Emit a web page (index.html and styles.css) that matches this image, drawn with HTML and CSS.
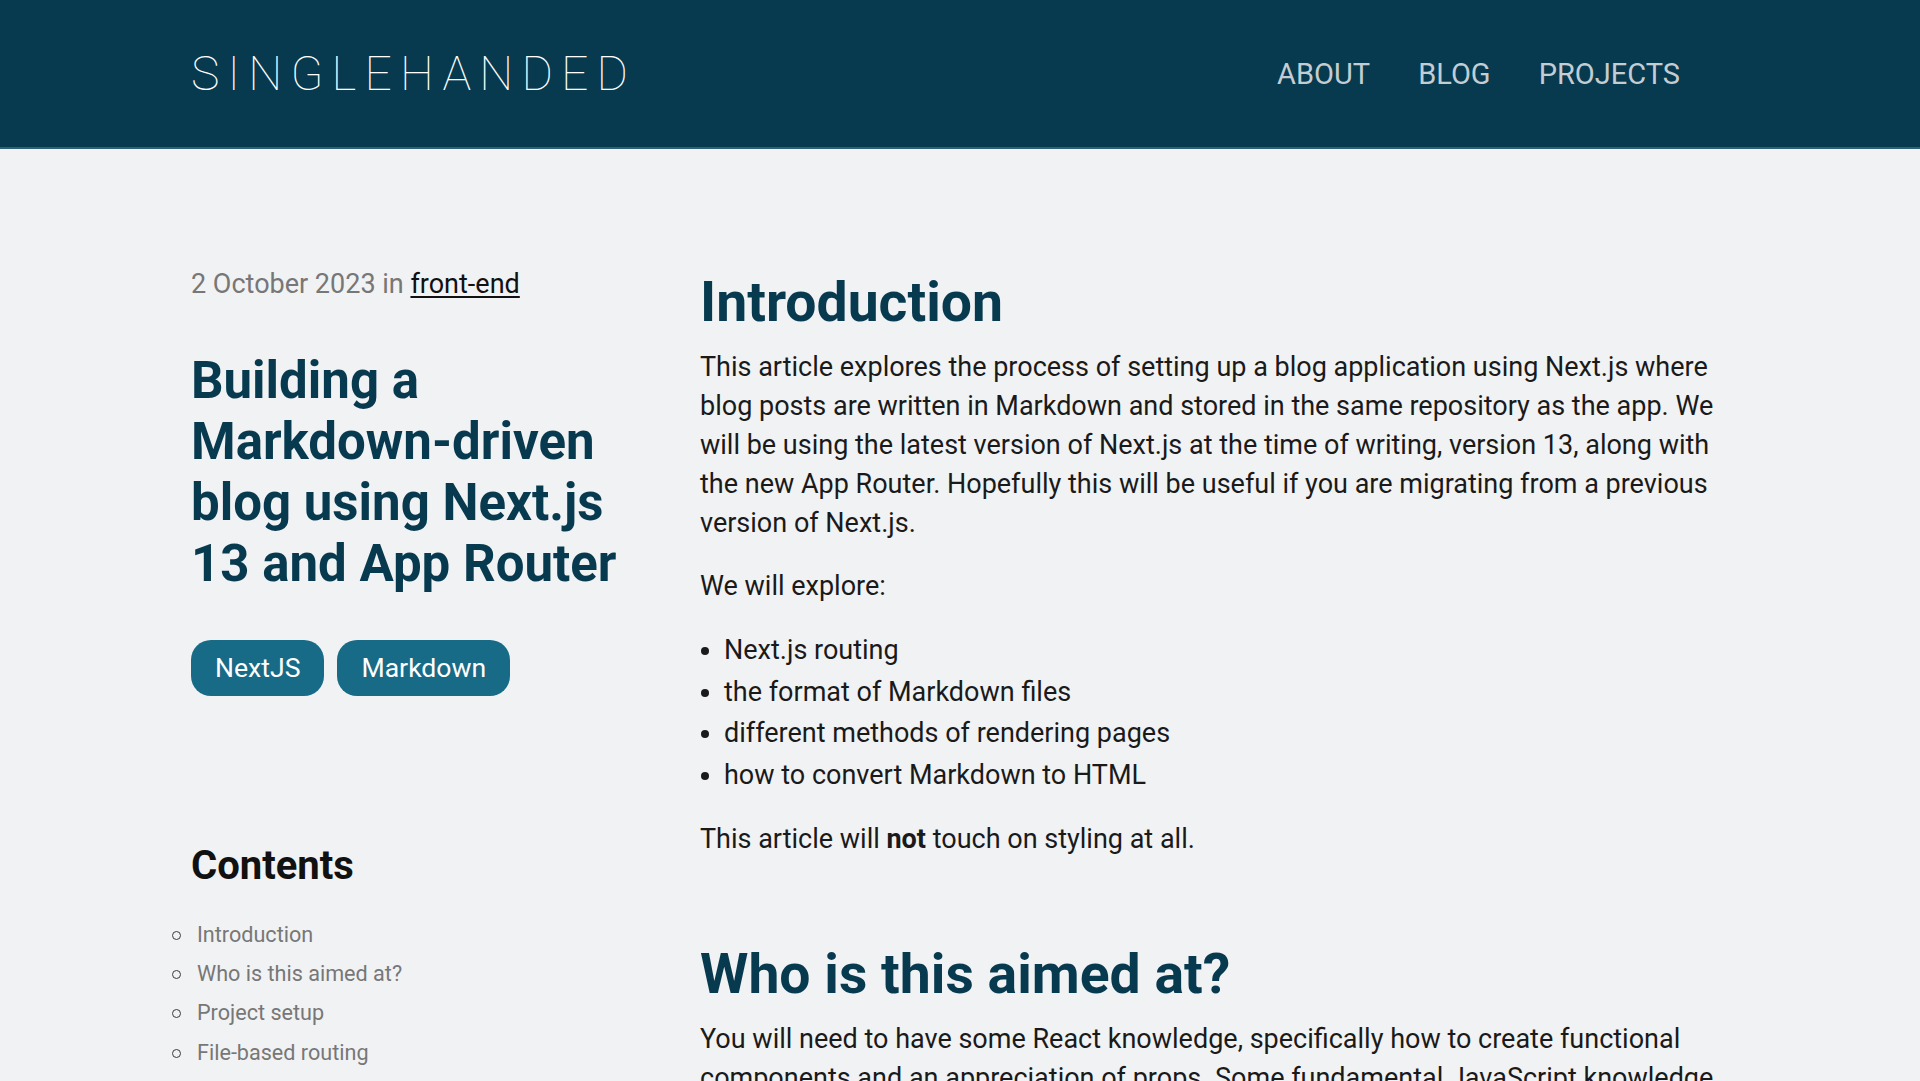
FILE: index.html
```html
<!DOCTYPE html>
<html lang="en">
<head>
<meta charset="utf-8">
<title>Building a Markdown-driven blog using Next.js 13 and App Router</title>
<link rel="stylesheet" href="styles.css">
</head>
<body>
<header class="site-header">
  <div class="header-inner">
    <a class="logo" href="#">SINGLEHANDED</a>
    <nav class="nav">
      <a href="#">ABOUT</a>
      <a href="#">BLOG</a>
      <a href="#">PROJECTS</a>
    </nav>
  </div>
</header>
<main class="page">
  <aside class="sidebar">
    <p class="meta">2 October 2023 in <a href="#">front-end</a></p>
    <h1 class="title">Building a Markdown-driven blog using Next.js 13 and App Router</h1>
    <div class="tags">
      <span class="tag">NextJS</span>
      <span class="tag">Markdown</span>
    </div>
    <h2 class="contents-title">Contents</h2>
    <ul class="toc">
      <li><a href="#">Introduction</a></li>
      <li><a href="#">Who is this aimed at?</a></li>
      <li><a href="#">Project setup</a></li>
      <li><a href="#">File-based routing</a></li>
    </ul>
  </aside>
  <article class="article">
    <h2>Introduction</h2>
    <p>This article explores the process of setting up a blog application using Next.js where blog posts are written in Markdown and stored in the same repository as the app. We will be using the latest version of Next.js at the time of writing, version 13, along with the new App Router. Hopefully this will be useful if you are migrating from a previous version of Next.js.</p>
    <p>We will explore:</p>
    <ul>
      <li>Next.js routing</li>
      <li>the format of Markdown files</li>
      <li>different methods of rendering pages</li>
      <li>how to convert Markdown to HTML</li>
    </ul>
    <p>This article will <strong>not</strong> touch on styling at all.</p>
    <h2>Who is this aimed at?</h2>
    <p>You will need to have some React knowledge, specifically how to create functional components and an appreciation of props. Some fundamental JavaScript knowledge is assumed, such as working with arrays and objects.</p>
  </article>
</main>
</body>
</html>
```
FILE: styles.css
```css
* { box-sizing: border-box; }
html, body { margin: 0; padding: 0; }
body {
  background: #f1f2f4;
  font-family: Roboto, "Liberation Sans", sans-serif;
  color: #1a1a1a;
  overflow: hidden;
}
.site-header {
  background: #073a4f;
  border-bottom: 2px solid #2f6176;
}
.header-inner {
  max-width: 1536px;
  margin: 0 auto;
  height: 147px;
  display: flex;
  align-items: center;
  justify-content: space-between;
  padding-right: 48px;
}
.logo {
  font-weight: 100;
  font-size: 48px;
  letter-spacing: 8.2px;
  color: #ffffff;
  text-decoration: none;
  margin-left: -1px;
}
.nav { display: flex; gap: 48px; }
.nav a {
  color: #c3cdd2;
  text-decoration: none;
  font-size: 29px;
  font-weight: 400;
}
.page {
  max-width: 1536px;
  margin: 0 auto;
  padding-top: 116px;
  display: grid;
  grid-template-columns: 460px 1fr;
  column-gap: 48px;
  align-items: start;
}
.sidebar { margin-left: -1px; }
.meta {
  margin: 0;
  font-size: 27px;
  line-height: 39px;
  color: #777777;
}
.meta a { color: #111; text-decoration: underline; text-underline-offset: 3px; }
.title {
  margin: 46px 0 0;
  font-size: 51px;
  line-height: 61px;
  font-weight: 700;
  color: #073a4f;
}
.tags { display: flex; gap: 13px; margin-top: 46px; }
.tag {
  background: #176b87;
  color: #fff;
  font-size: 26.6px;
  line-height: 40px;
  padding: 8px 24px;
  border-radius: 20px;
}
.contents-title {
  margin: 146px 0 0;
  font-size: 40px;
  line-height: 48px;
  font-weight: 700;
  color: #111;
}
.toc {
  list-style: none;
  margin: 25px 0 0;
  padding-left: 6px;
}
.toc li {
  position: relative;
  font-size: 21.6px;
  line-height: 39.2px;
  color: #777;
}
.toc li::before {
  content: "";
  position: absolute;
  left: -25px;
  top: 16px;
  width: 7px;
  height: 7px;
  border: 1px solid #3a3a3a;
  border-radius: 50%;
}
.toc a { color: #777; text-decoration: none; }
.article {
  padding-top: 4px;
  font-size: 27px;
  line-height: 39px;
  color: #1a1a1a;
}
.article h2 {
  margin: 82px 0 12px;
  font-size: 55.3px;
  line-height: 67px;
  font-weight: 700;
  color: #073a4f;
}
.article h2:first-child { margin-top: 0; }
.article p { margin: 0 0 24px; }
.article ul { margin: 0 0 24px; padding-left: 24px; }
.article li { line-height: 41.5px; }
.article strong { font-weight: 700; }
```
